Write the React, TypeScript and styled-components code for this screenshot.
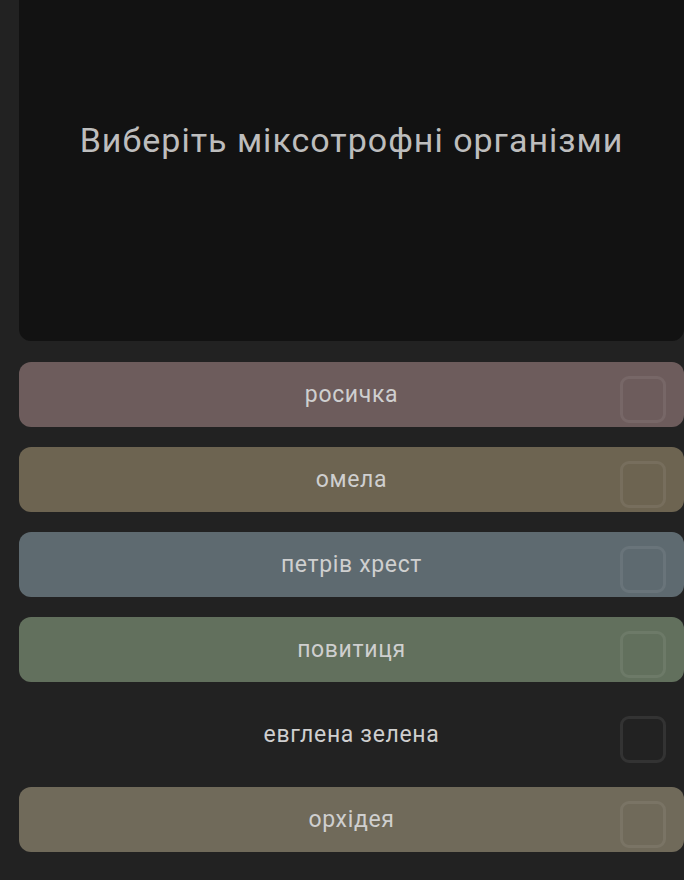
import React from 'react';
import styled, { createGlobalStyle } from 'styled-components';

const GlobalStyle = createGlobalStyle`
    html, body {
        margin: 0;
        padding: 0;
        background: #222222;
        font-family: Roboto, "Noto Sans", "Liberation Sans", sans-serif;
    }
`;

const Page = styled.div`
    width: 684px;
    min-height: 880px;
    padding-left: 19px;
    box-sizing: border-box;
    overflow: hidden;
`;

const QuestionCard = styled.div`
    width: 665px;
    height: 341px;
    box-sizing: border-box;
    padding-bottom: 61px;
    background: #121212;
    border-radius: 0 0 12px 12px;
    display: flex;
    align-items: center;
    justify-content: center;
`;

const QuestionText = styled.div`
    color: #bdbdbd;
    font-size: 34px;
    letter-spacing: 1px;
`;

const OptionList = styled.div`
    display: flex;
    flex-direction: column;
    gap: 20px;
    padding-top: 21px;
`;

const Option = styled.div<{ $bg: string }>`
    position: relative;
    width: 665px;
    height: 65px;
    border-radius: 12px;
    background: ${(p) => p.$bg};
    display: flex;
    align-items: center;
    justify-content: center;
`;

const OptionLabel = styled.span`
    color: #cfcfcf;
    font-size: 23px;
    letter-spacing: 0.65px;
`;

const Check = styled.div<{ $plain: boolean }>`
    position: absolute;
    right: 18px;
    top: 14px;
    width: 46px;
    height: 47px;
    box-sizing: border-box;
    border-radius: 9px;
    border: 3px solid ${(p) => (p.$plain ? '#333333' : 'rgba(255, 255, 255, 0.07)')};
`;

const options = [
    { label: 'росичка', bg: '#6d5c5c' },
    { label: 'омела', bg: '#6d6451' },
    { label: 'петрів хрест', bg: '#5e6a70' },
    { label: 'повитиця', bg: '#62705d' },
    { label: 'евглена зелена', bg: 'transparent' },
    { label: 'орхідея', bg: '#706a5a' },
];

const App: React.FC = () => {
    return (
        <Page>
            <GlobalStyle />
            <QuestionCard>
                <QuestionText>Виберіть міксотрофні організми</QuestionText>
            </QuestionCard>
            <OptionList>
                {options.map((o) => (
                    <Option key={o.label} $bg={o.bg}>
                        <OptionLabel>{o.label}</OptionLabel>
                        <Check $plain={o.bg === 'transparent'} />
                    </Option>
                ))}
            </OptionList>
        </Page>
    );
};

export default App;
